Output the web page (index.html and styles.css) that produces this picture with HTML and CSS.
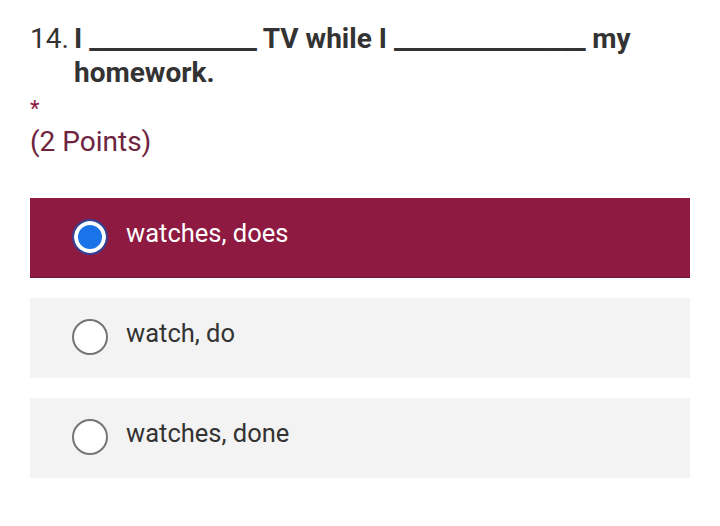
FILE: index.html
```html
<!DOCTYPE html>
<html>
<head>
<meta charset="utf-8">
<link rel="stylesheet" href="styles.css">
</head>
<body>
<div class="question">
  <div class="title">
    <span class="num">14.</span>
    <div class="text"><span>I</span> <span class="blank">______________</span> <span>TV while I</span> <span class="blank">________________</span> <span>my</span> <span>homework.</span></div>
  </div>
  <div class="req">*</div>
  <div class="points">(2 Points)</div>
  <div class="options">
    <div class="option selected"><span class="radio"></span><span class="label">watches, does</span></div>
    <div class="option"><span class="radio"></span><span class="label">watch, do</span></div>
    <div class="option"><span class="radio"></span><span class="label">watches, done</span></div>
  </div>
</div>
</body>
</html>
```
FILE: styles.css
```css
html, body {
  margin: 0;
  padding: 0;
  background: #ffffff;
}
body {
  font-family: Roboto, "Liberation Sans", sans-serif;
  width: 720px;
  height: 526px;
  overflow: hidden;
}
.question {
  padding: 22px 30px 0 30px;
}
.title {
  display: flex;
  font-size: 28px;
  line-height: 34px;
  color: #333333;
}
.num {
  flex: none;
  width: 44px;
  font-weight: 400;
}
.text {
  font-weight: 700;
  width: 590px;
}
.blank {
  letter-spacing: -0.5px;
}
.req {
  color: #8b1a3f;
  font-size: 22px;
  line-height: 30px;
  margin-top: 4px;
}
.points {
  color: #6e2440;
  font-size: 28px;
  line-height: 34px;
  margin-top: 1px;
}
.options {
  margin-top: 39px;
  display: flex;
  flex-direction: column;
  gap: 20px;
  width: 660px;
}
.option {
  height: 80px;
  background: #f3f3f3;
  display: flex;
  align-items: center;
  padding-left: 42px;
  box-sizing: border-box;
  color: #333333;
  font-size: 25.5px;
}
.option.selected {
  background: #8e1941;
  color: #ffffff;
  box-shadow: inset 0 -1px 0 #6e1834;
}
.radio {
  flex: none;
  width: 32px;
  height: 32px;
  border-radius: 50%;
  border: 2px solid #757575;
  background: #ffffff;
  margin-right: 18px;
  box-sizing: content-box;
  margin-top: -2px;
}
.option.selected .radio {
  border: 2px solid #3b3f8f;
  background: #1a73e8;
  box-shadow: inset 0 0 0 4px #ffffff;
}
.label {
  margin-top: -10px;
}
```
